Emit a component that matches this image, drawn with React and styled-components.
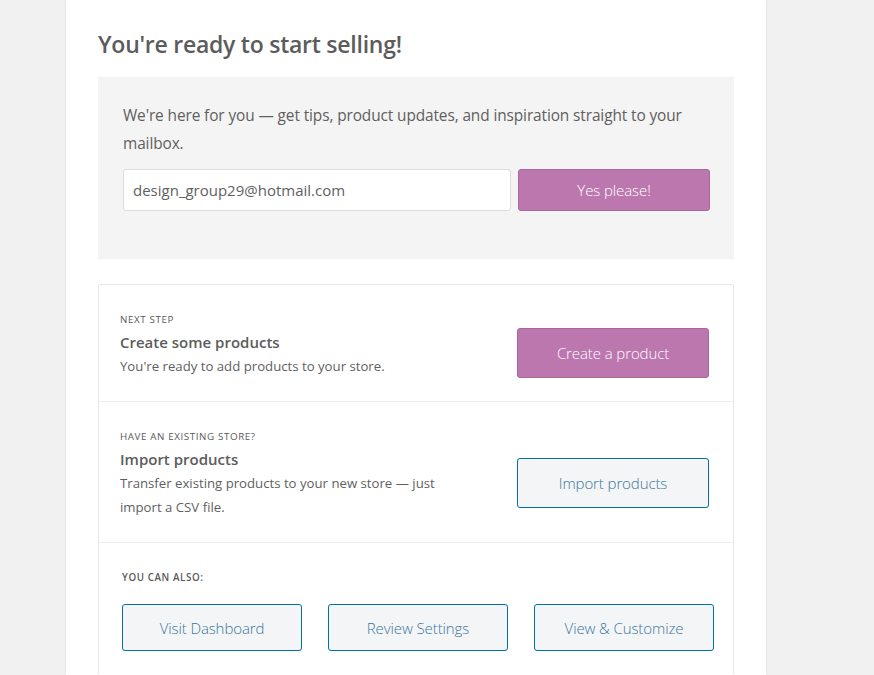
import React from "react";
import styled, { createGlobalStyle } from "styled-components";

const Global = createGlobalStyle`
  html, body { margin: 0; padding: 0; background: #f1f1f1; }
  body { font-family: "Open Sans", "Noto Sans", sans-serif; color: #5f5f5f; }
  * { box-sizing: border-box; }
`;

const Page = styled.div`
  display: flex;
  padding-left: 66px;
  min-height: 675px;
`;

const Panel = styled.main`
  width: 700px;
  background: #fff;
  box-shadow: 0 0 3px rgba(0, 0, 0, 0.08);
  padding: 27px 32px 0 32px;
  min-height: 675px;
`;

const Title = styled.h1`
  margin: 0 0 16px 0;
  font-size: 23px;
  line-height: 34px;
  font-weight: 600;
  color: #5c5c5c;
  letter-spacing: -0.25px;
`;

const Newsletter = styled.section`
  background: #f4f4f4;
  padding: 24px 24px 48px 25px;
`;

const Lead = styled.p`
  margin: 0 0 12px 0;
  font-size: 15.4px;
  line-height: 28px;
  color: #5f5f5f;
  letter-spacing: -0.1px;
  padding-top: 1px;
  margin-bottom: 11px;
`;

const FormRow = styled.div`
  display: flex;
  gap: 7px;
`;

const EmailInput = styled.input`
  width: 388px;
  height: 42px;
  border: 1px solid #dcdcdc;
  border-radius: 3px;
  background: #fff;
  padding: 0 9px;
  font-family: inherit;
  font-size: 15px;
  color: #5f5f5f;
  outline: none;
`;

const Button = styled.button`
  width: ${(p) => p.$w || 192}px;
  height: ${(p) => p.$h || 50}px;
  margin-top: ${(p) => p.$mt || 0}px;
  border-radius: 3px;
  font-family: inherit;
  font-size: 15px;
  font-weight: 300;
  cursor: pointer;
  letter-spacing: -0.1px;
  border: 1px solid ${(p) => (p.$primary ? "#a7679b" : "#0071a1")};
  background: ${(p) => (p.$primary ? "#bb77ae" : "#f3f5f6")};
  color: ${(p) => (p.$primary ? "#fff" : "#3c76a0")};
  flex-shrink: 0;
`;

const Card = styled.section`
  margin-top: 25px;
  border: 1px solid #e8e8e8;
  border-bottom: none;
  border-radius: 2px 2px 0 0;
`;

const Step = styled.div`
  display: flex;
  align-items: flex-start;
  justify-content: space-between;
  padding: 27px 24px 23px 21px;
  border-top: ${(p) => (p.$first ? "none" : "1px solid #ececec")};
`;

const StepText = styled.div`
  max-width: 340px;
`;

const Label = styled.div`
  font-size: 9.8px;
  line-height: 16px;
  text-transform: uppercase;
  color: #5a5a5a;
  letter-spacing: 0.6px;
  margin-bottom: 2px;
`;

const StepTitle = styled.div`
  font-size: 15px;
  font-weight: 600;
  line-height: 24px;
  color: #5c5c5c;
`;

const StepDesc = styled.div`
  font-size: 13.2px;
  line-height: 24px;
  color: #5f5f5f;
`;

const Also = styled.div`
  padding: 27px 20px 23px 23px;
  border-top: 1px solid #ececec;
`;

const AlsoLabel = styled(Label)`
  font-weight: 600;
  letter-spacing: 0.6px;
  margin-bottom: 18px;
`;

const AlsoRow = styled.div`
  display: flex;
  gap: 26px;
`;

export default function App() {
  return (
    <>
      <Global />
      <Page>
        <Panel>
          <Title>You're ready to start selling!</Title>
          <Newsletter>
            <Lead>
              We're here for you — get tips, product updates, and inspiration straight to your
              mailbox.
            </Lead>
            <FormRow>
              <EmailInput defaultValue="design_group29@hotmail.com" />
              <Button $primary $w={192} $h={42}>Yes please!</Button>
            </FormRow>
          </Newsletter>
          <Card>
            <Step $first>
              <StepText>
                <Label>Next step</Label>
                <StepTitle>Create some products</StepTitle>
                <StepDesc>You're ready to add products to your store.</StepDesc>
              </StepText>
              <Button $primary $mt={16}>Create a product</Button>
            </Step>
            <Step>
              <StepText>
                <Label>Have an existing store?</Label>
                <StepTitle>Import products</StepTitle>
                <StepDesc>Transfer existing products to your new store — just import a CSV file.</StepDesc>
              </StepText>
              <Button $mt={29}>Import products</Button>
            </Step>
            <Also>
              <AlsoLabel>You can also:</AlsoLabel>
              <AlsoRow>
                <Button $w={180} $h={47}>Visit Dashboard</Button>
                <Button $w={180} $h={47}>Review Settings</Button>
                <Button $w={180} $h={47}>View &amp; Customize</Button>
              </AlsoRow>
            </Also>
          </Card>
        </Panel>
      </Page>
    </>
  );
}
